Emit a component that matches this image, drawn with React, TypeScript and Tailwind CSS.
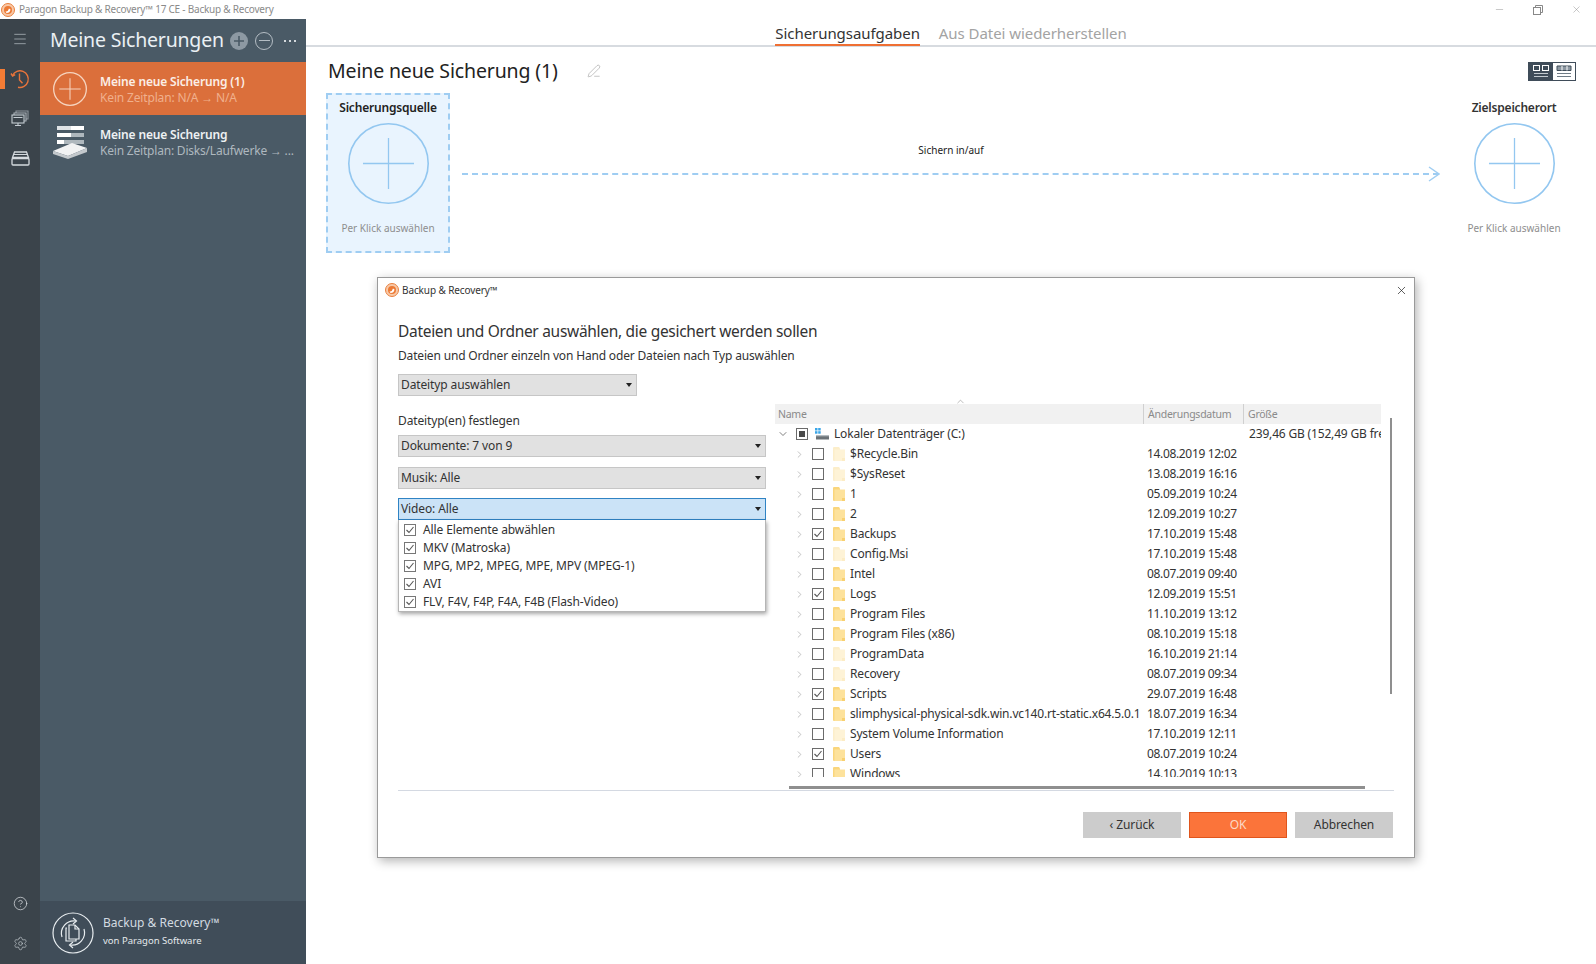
import { Minus, X, PenLine, ChevronRight, ChevronDown, ChevronUp, CircleHelp, Settings, Menu } from 'lucide-react';
import clsx from 'clsx';

const font = 'font-["Noto_Sans","Open_Sans",sans-serif]';

type Row = { name: string; date: string; checked?: boolean; faded?: boolean };

const ROWS: Row[] = [
  { name: '$Recycle.Bin', date: '14.08.2019 12:02', faded: true },
  { name: '$SysReset', date: '13.08.2019 16:16', faded: true },
  { name: '1', date: '05.09.2019 10:24' },
  { name: '2', date: '12.09.2019 10:27' },
  { name: 'Backups', date: '17.10.2019 15:48', checked: true },
  { name: 'Config.Msi', date: '17.10.2019 15:48', faded: true },
  { name: 'Intel', date: '08.07.2019 09:40' },
  { name: 'Logs', date: '12.09.2019 15:51', checked: true },
  { name: 'Program Files', date: '11.10.2019 13:12' },
  { name: 'Program Files (x86)', date: '08.10.2019 15:18' },
  { name: 'ProgramData', date: '16.10.2019 21:14', faded: true },
  { name: 'Recovery', date: '08.07.2019 09:34', faded: true },
  { name: 'Scripts', date: '29.07.2019 16:48', checked: true },
  { name: 'slimphysical-physical-sdk.win.vc140.rt-static.x64.5.0.1', date: '18.07.2019 16:34' },
  { name: 'System Volume Information', date: '17.10.2019 12:11', faded: true },
  { name: 'Users', date: '08.07.2019 10:24', checked: true },
  { name: 'Windows', date: '14.10.2019 10:13' },
];

const VIDEO_TYPES = ['Alle Elemente abwählen', 'MKV (Matroska)', 'MPG, MP2, MPEG, MPE, MPV (MPEG-1)', 'AVI', 'FLV, F4V, F4P, F4A, F4B (Flash-Video)'];

function AppLogo() {
  return (
    <svg width="14" height="14" viewBox="0 0 14 14" className="shrink-0">
      <circle cx="7" cy="7" r="6.5" fill="#f8c9a8" stroke="#e8813f" />
      <circle cx="7" cy="7" r="4" fill="#ec7a35" />
      <path d="M4.5 8.5 Q7 9 8 5.5 L9.5 6.5 Q9 10 5.5 10 Z" fill="#fff" />
    </svg>
  );
}

function PlusCircle({ size, stroke, width = 2 }: { size: number; stroke: string; width?: number }) {
  const c = size / 2;
  const arm = size * 0.315;
  return (
    <svg width={size} height={size} viewBox={`0 0 ${size} ${size}`} className="shrink-0">
      <circle cx={c} cy={c} r={c - width / 2} fill="none" stroke={stroke} strokeWidth={width} />
      <path d={`M${c - arm} ${c}H${c + arm}M${c} ${c - arm}V${c + arm}`} stroke={stroke} strokeWidth={width * 0.8} />
    </svg>
  );
}

function ClockIcon() {
  return (
    <svg width="20" height="20" viewBox="0 0 20 20" fill="none" stroke="#e8743b" strokeWidth="1.4">
      <path d="M2.5 6.5A8.3 8.3 0 1 1 8 18.2" />
      <path d="M1 4.5 2.6 7l2.6-1.3" />
      <path d="M9.5 4.5V11l3 3.2" />
    </svg>
  );
}

function HostsIcon() {
  return (
    <svg width="18" height="16" viewBox="0 0 18 16" fill="none" stroke="#c4ccd2" strokeWidth="1.1">
      <path d="M5 3V1h12v8h-2" opacity=".6" />
      <path d="M3 5V3h12v8h-2" opacity=".8" />
      <rect x="1" y="5" width="12" height="8" fill="#3b444b" />
      <path d="M7 13v2M4 15.5h6M2.5 7.5h9" />
    </svg>
  );
}

function DrawerIcon() {
  return (
    <svg width="19" height="15" viewBox="0 0 19 15" fill="none" stroke="#d5dade" strokeWidth="1.3">
      <path d="M3.5 1h12l2 5.5H1.5z" />
      <path d="M3 3.5h13" strokeWidth="1" />
      <rect x="1" y="7.5" width="17" height="6.5" rx="1" />
    </svg>
  );
}

function DiskStackIcon() {
  return (
    <svg width="36" height="34" viewBox="0 0 36 34">
      <rect x="5" y="1" width="27" height="4" fill="#fff" />
      <rect x="5" y="1" width="14" height="4" fill="#dfe3e6" />
      <rect x="5" y="8" width="27" height="4" fill="#fff" />
      <rect x="19" y="8" width="13" height="4" fill="#aeb7bd" />
      <rect x="5" y="15" width="27" height="4" fill="#fff" />
      <rect x="12" y="15" width="20" height="4" fill="#aeb7bd" />
      <path d="M1 26 20 18 35 23 16 31z" fill="#f1f2f3" />
      <path d="M1 26V29L16 34 35 27V23L16 31z" fill="#c4c9cd" />
    </svg>
  );
}

function ProductLogo() {
  return (
    <svg width="42" height="42" viewBox="0 0 42 42" fill="none" stroke="#e8edf0" strokeWidth="1.2">
      <circle cx="21" cy="21" r="20" />
      <path d="M10 25A12.5 12.5 0 0 1 24 9" />
      <path d="M21 6l3.5 3L21 12" />
      <path d="M32 17A12.5 12.5 0 0 1 18 33" />
      <path d="M21 30l-3.5 3 3.5 3" />
      <path d="M15 16h-1v13h10v-2" />
      <path d="M17 13h6l4 4v10H17z" fill="#404d59" />
      <path d="M23 13v4h4" />
    </svg>
  );
}

function Folder({ faded }: { faded?: boolean }) {
  return (
    <svg width="12" height="14" viewBox="0 0 12 14" className="shrink-0" opacity={faded ? 0.4 : 1}>
      <path d="M0 1a1 1 0 0 1 1-1h5l1 1.5V14H1a1 1 0 0 1-1-1z" fill="#fad67c" />
      <path d="M1.5 2.5H12v11a.5.5 0 0 1-.5.5H1.5z" fill="#fde29c" />
      <path d="M9 11h3v2.5a.5.5 0 0 1-.5.5H9z" fill="#f8d070" />
    </svg>
  );
}

function CheckBox({ checked, mixed, className }: { checked?: boolean; mixed?: boolean; className?: string }) {
  return (
    <span className={clsx('flex h-[12px] w-[12px] shrink-0 items-center justify-center border border-[#6b6b6b] bg-white', className)}>
      {checked && (
        <svg width="10" height="10" viewBox="0 0 10 10" fill="none" stroke="#555" strokeWidth="1.1">
          <path d="M1.5 5 4 7.5 8.5 2" />
        </svg>
      )}
      {mixed && <span className="h-[6px] w-[6px] bg-[#4a4a4a]" />}
    </span>
  );
}

function Select({ label, active, className }: { label: string; active?: boolean; className?: string }) {
  return (
    <div
      className={clsx(
        'flex h-[22px] items-center justify-between border pl-[2px] pr-[3px] text-[12px] tracking-[-0.12px] text-[#333]',
        active ? 'border-[#2f83c4] bg-[#cbe3f7]' : 'border-[#c6c6c6] bg-[#e1e1e1]',
        className,
      )}
    >
      <span>{label}</span>
      <span className="mr-[1px] h-0 w-0 border-x-[3.5px] border-t-[4px] border-x-transparent border-t-[#222]" />
    </div>
  );
}

function Sidebar() {
  return (
    <aside className="flex w-[266px] shrink-0 flex-col bg-[#4a5a66]">
      <div className="flex h-[43px] items-center pl-[10px]">
        <span className="w-[180px] whitespace-nowrap pb-[2px] text-[19.5px] leading-none tracking-[-0.2px] text-[#eaf0f4]">Meine Sicherungen</span>
        <span className="flex h-[18px] w-[18px] items-center justify-center rounded-full bg-[#8d99a3] text-[#4a5a66]">
          <svg width="12" height="12" viewBox="0 0 12 12" stroke="#4a5a66" strokeWidth="1.6"><path d="M1 6h10M6 1v10" /></svg>
        </span>
        <span className="ml-[7px] flex h-[18px] w-[18px] items-center justify-center rounded-full border border-[#b4bdc4]">
          <span className="h-[1px] w-[11px] bg-[#b4bdc4]" />
        </span>
        <span className="ml-[11px] flex gap-[3px]">
          <i className="h-[2px] w-[2px] bg-[#d4d9dd]" />
          <i className="h-[2px] w-[2px] bg-[#d4d9dd]" />
          <i className="h-[2px] w-[2px] bg-[#d4d9dd]" />
        </span>
      </div>
      <div className="flex h-[53px] items-center bg-[#db6f3b] pl-[13px]">
        <PlusCircle size={34} stroke="#f6d4bf" width={1.3} />
        <div className="ml-[13px] pt-[2px] text-[12px] leading-[16px] tracking-[-0.16px]">
          <div className="font-semibold text-[#fbeee6]">Meine neue Sicherung (1)</div>
          <div className="text-[#f0b08d]">Kein Zeitplan: N/A → N/A</div>
        </div>
      </div>
      <div className="flex h-[53px] items-center pl-[12px]">
        <DiskStackIcon />
        <div className="ml-[12px] pt-[2px] text-[12px] leading-[16px] tracking-[-0.16px]">
          <div className="font-semibold text-[#eef1f3]">Meine neue Sicherung</div>
          <div className="tracking-[-0.2px] text-[#aeb8bf]">Kein Zeitplan: Disks/Laufwerke → ...</div>
        </div>
      </div>
      <div className="flex-1" />
      <div className="flex h-[63px] items-center bg-[#404d59] pl-[12px]">
        <ProductLogo />
        <div className="-mt-[2px] ml-[9px]">
          <div className="text-[12px] leading-[19px] text-[#d3dbe1]">Backup &amp; Recovery™</div>
          <div className="text-[9.5px] leading-[18px] text-[#e4e9ec]">von Paragon Software</div>
        </div>
      </div>
    </aside>
  );
}

function Rail() {
  return (
    <nav className="flex w-[40px] shrink-0 flex-col items-center bg-[#3b444b]">
      <Menu size={16} strokeWidth={1.2} color="#aab2b8" className="mt-[12px]" />
      <div className="relative mt-[22px] flex h-[20px] w-full items-center justify-center">
        <span className="absolute left-0 top-0 h-[20px] w-[5px] bg-[#f37c35]" />
        <ClockIcon />
      </div>
      <div className="mt-[21px]"><HostsIcon /></div>
      <div className="mt-[25px]"><DrawerIcon /></div>
      <div className="flex-1" />
      <CircleHelp size={15} strokeWidth={1.2} color="#d5dade" />
      <Settings size={15} strokeWidth={1.1} color="#c2c9ce" className="mb-[13px] mt-[25px]" />
    </nav>
  );
}

function Target({ title, titleClass }: { title: string; titleClass?: string }) {
  return (
    <div className="flex flex-col items-center">
      <div className={clsx('mt-[6px] text-[12px] font-semibold leading-[18px] tracking-[-0.2px]', titleClass)}>{title}</div>
      <div className="mt-[6px]"><PlusCircle size={81} stroke="#93c7f0" width={1.6} /></div>
      <div className="mt-[17px] text-[10px] leading-[14px] text-[#8e8e8e]">Per Klick auswählen</div>
    </div>
  );
}

function ViewToggle() {
  return (
    <div className="flex h-[19px] w-[48px] border border-[#3f4c59]">
      <div className="flex w-[24px] items-center justify-center bg-[#3f4c59]">
        <svg width="16" height="13" viewBox="0 0 16 13" fill="none" stroke="#fff">
          <rect x=".5" y=".5" width="6" height="5" />
          <rect x="9.5" y=".5" width="6" height="5" />
          <path d="M1 8.5h14M1 11.5h14" stroke="#c3cad0" />
        </svg>
      </div>
      <div className="flex flex-1 items-center justify-center bg-white">
        <svg width="16" height="13" viewBox="0 0 16 13" fill="none" stroke="#3f4c59">
          <path d="M1 1h14v4.5H1z" fill="#8d98a2" />
          <path d="M6 1v4.5M11 1v4.5" stroke="#fff" />
          <path d="M1 8.5h14M1 11.5h14" stroke="#6f7b86" />
        </svg>
      </div>
    </div>
  );
}

function FileTree() {
  return (
    <div className="relative h-[373px] w-[606px] text-[12px] tracking-[-0.17px] text-[#333]">
      <ChevronUp size={11} strokeWidth={1.2} color="#888" className="absolute left-[180px] top-[-8px]" />
      <div className="flex h-[20px] items-center bg-[#f1f1f1] text-[10.5px] leading-[21px] tracking-[-0.25px] text-[#8a8a8a]">
        <span className="h-full w-[368px] pl-[3px]">Name</span>
        <span className="h-full w-[100px] border-l border-[#d0d0d0] pl-[4px]">Änderungsdatum</span>
        <span className="h-full border-l border-[#d0d0d0] pl-[4px]">Größe</span>
      </div>
      <div className="h-[353px] overflow-hidden">
        <div className="flex h-[20px] items-center">
          <ChevronDown size={12} strokeWidth={1.5} color="#555" className="ml-[2px] shrink-0" />
          <CheckBox mixed className="ml-[7px]" />
          <svg width="14" height="12" viewBox="0 0 14 12" className="ml-[7px] shrink-0">
            <rect x="0" y="0" width="2.5" height="2.5" fill="#3aa6e8" />
            <rect x="3.2" y="0" width="2.5" height="2.5" fill="#3aa6e8" />
            <rect x="0" y="3.2" width="2.5" height="2.5" fill="#3aa6e8" />
            <rect x="3.2" y="3.2" width="2.5" height="2.5" fill="#3aa6e8" />
            <rect x="1" y="7" width="13" height="4.5" fill="#6b7277" />
            <rect x="1" y="7" width="13" height="1.3" fill="#b5bcc0" />
          </svg>
          <span className="ml-[5px] w-[415px] shrink-0 whitespace-nowrap">Lokaler Datenträger (C:)</span>
          <span className="whitespace-nowrap">239,46 GB (152,49 GB frei)</span>
        </div>
        {ROWS.map((row) => (
          <div key={row.name} className="flex h-[20px] items-center">
            <ChevronRight size={11} strokeWidth={1.3} color="#999" className="ml-[19px] shrink-0" />
            <CheckBox checked={row.checked} className="ml-[7px]" />
            <span className="ml-[9px]"><Folder faded={row.faded} /></span>
            <span className="ml-[5px] w-[297px] shrink-0 whitespace-nowrap">{row.name}</span>
            <span className="whitespace-nowrap tracking-[-0.34px]">{row.date}</span>
          </div>
        ))}
      </div>
    </div>
  );
}

function BackupDialog() {
  return (
    <div className="absolute left-[377px] top-[277px] flex h-[581px] w-[1038px] flex-col border border-[#9a9a9a] bg-white shadow-[2px_3px_10px_rgba(0,0,0,0.3)]">
      <div className="flex h-[24px] items-center pl-[7px] pr-[6px] text-[10px] tracking-[-0.1px] text-[#333]">
        <AppLogo />
        <span className="ml-[3px] flex-1">Backup &amp; Recovery™</span>
        <X size={13} strokeWidth={1.3} color="#222" />
      </div>
      <div className="flex flex-1 flex-col pl-[20px] pr-[20px]">
        <h2 className="mt-[17px] text-[15.5px] font-normal leading-[24px] tracking-[-0.3px] text-[#333]">Dateien und Ordner auswählen, die gesichert werden sollen</h2>
        <p className="mt-[4px] text-[12px] leading-[18px] tracking-[-0.165px] text-[#333]">Dateien und Ordner einzeln von Hand oder Dateien nach Typ auswählen</p>
        <Select label="Dateityp auswählen" className="mt-[9px] w-[239px]" />
        <div className="mt-[8px] flex h-[386px]">
          <div className="w-[368px] shrink-0">
            <div className="mt-[8px] text-[12px] leading-[18px] tracking-[-0.12px] text-[#333]">Dateityp(en) festlegen</div>
            <div className="mt-[5px] flex flex-col gap-[9.5px]">
              <Select label="Dokumente: 7 von 9" />
              <Select label="Musik: Alle" />
              <div>
                <Select label="Video: Alle" active />
                <div className="h-[92px] border border-t-0 border-[#b5b5b5] bg-white pl-[5px] pt-[1px] text-[12px] leading-[18px] tracking-[-0.12px] text-[#333] shadow-[1px_2px_4px_rgba(0,0,0,0.35)]">
                  {VIDEO_TYPES.map((t) => (
                    <div key={t} className="flex items-center whitespace-nowrap">
                      <CheckBox checked className="border-[#777]" />
                      <span className="ml-[7px]">{t}</span>
                    </div>
                  ))}
                </div>
              </div>
            </div>
          </div>
          <div className="ml-[9px] shrink-0">
            <FileTree />
            <div className="ml-[14px] mt-[9px] h-[3px] w-[576px] bg-[#8f8f8f]" />
          </div>
          <div className="ml-[9px] mt-[14px] h-[276px] w-[2px] bg-[#8f8f8f]" />
        </div>
        <div className="h-[1px] bg-[#d4d9e2]" />
        <div className="mt-[21px] flex justify-end gap-[8px] pr-[1px] text-[12px] tracking-[-0.1px]">
          <button className="h-[26px] w-[98px] bg-[#cccccc] text-[#333]">‹ Zurück</button>
          <button className="h-[26px] w-[98px] border border-[#e0551c] bg-[#fb743a] text-[#fbd9c6]">OK</button>
          <button className="h-[26px] w-[98px] bg-[#cccccc] text-[#333]">Abbrechen</button>
        </div>
      </div>
    </div>
  );
}

export default function App() {
  return (
    <div className={clsx('relative flex h-[964px] w-[1596px] flex-col overflow-hidden bg-white', font)}>
      <header className="flex h-[19px] shrink-0 items-center pl-[1px] pr-[14px]">
        <AppLogo />
        <span className="ml-[4px] flex-1 text-[10px] tracking-[-0.22px] text-[#8a8a8a]">Paragon Backup &amp; Recovery™ 17 CE - Backup &amp; Recovery</span>
        <div className="flex items-center gap-[28px]">
          <Minus size={11} strokeWidth={1} color="#888" />
          <svg width="10" height="10" viewBox="0 0 10 10" fill="none" stroke="#888"><rect x=".5" y="2.5" width="7" height="7" /><path d="M2.5 2.5v-2h7v7h-2" /></svg>
          <X size={11} strokeWidth={1} color="#888" />
        </div>
      </header>
      <div className="flex min-h-0 flex-1">
        <Rail />
        <Sidebar />
        <main className="flex min-w-0 flex-1 flex-col">
          <div className="flex h-[28px] shrink-0 justify-center gap-[19px] border-b-2 border-[#d7dbe0] text-[15px] leading-[28px] tracking-[-0.06px]">
            <span className="h-[27px] border-b-2 border-[#ef6f33] text-[#333]">Sicherungsaufgaben</span>
            <span className="text-[#a3a3a3]">Aus Datei wiederherstellen</span>
          </div>
          <div className="flex h-[46px] shrink-0 items-center pl-[22px] pr-[20px] pt-[2px]">
            <h1 className="text-[19.5px] font-normal tracking-[-0.15px] text-[#222]">Meine neue Sicherung (1)</h1>
            <PenLine size={14} strokeWidth={1} color="#9a9a9a" className="ml-[29px]" />
            <div className="flex-1" />
            <ViewToggle />
          </div>
          <div className="flex shrink-0 pl-[20px]">
            <div className="h-[160px] w-[124px] border-2 border-dashed border-[#9fcdf2] bg-[#e9f4fe]">
              <div className="-mt-[2px]"><Target title="Sicherungsquelle" titleClass="text-[#222]" /></div>
            </div>
            <div className="ml-[12px] flex w-[978px] flex-col">
              <div className="mt-[49px] text-center text-[10px] leading-[16px] text-[#222]">Sichern in/auf</div>
              <div className="mt-[8px] flex items-center">
                <div className="flex-1 border-t-2 border-dashed border-[#9fcdf2]" />
                <svg width="12" height="16" viewBox="0 0 12 16" fill="none" stroke="#9fcdf2" strokeWidth="1.5" className="-ml-[11px]">
                  <path d="M1 1l10 7-10 7" />
                </svg>
              </div>
            </div>
            <div className="ml-[9px] w-[130px]">
              <Target title="Zielspeicherort" titleClass="text-[#333]" />
            </div>
          </div>
        </main>
      </div>
      <BackupDialog />
    </div>
  );
}
